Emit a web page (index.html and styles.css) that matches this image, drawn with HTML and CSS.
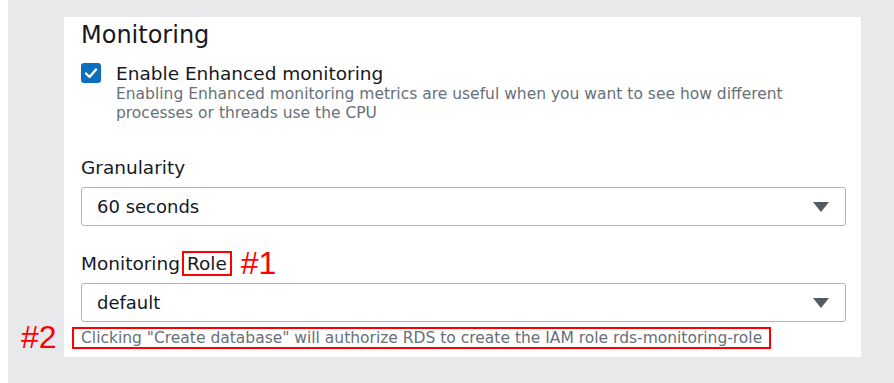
FILE: index.html
```html
<!DOCTYPE html>
<html lang="en">
<head>
    <meta charset="UTF-8">
    <meta name="viewport" content="width=device-width, initial-scale=1.0">
    <title>Monitoring</title>
    <link rel="stylesheet" href="styles.css">
</head>
<body>

    <div class="page">
        <div class="panel">
            <h2 class="title">Monitoring</h2>

            <div class="check-row">
                <span class="checkbox">
                    <svg width="14" height="12" viewBox="0 0 14 12"><path d="M2 6.5 L5.5 10 L12 2.5" fill="none" stroke="#fff" stroke-width="2.4" stroke-linecap="round" stroke-linejoin="round"/></svg>
                </span>
                <div class="check-text">
                    <div class="check-label">Enable Enhanced monitoring</div>
                    <div class="check-desc">Enabling Enhanced monitoring metrics are useful when you want to see how different processes or threads use the CPU</div>
                </div>
            </div>

            <div class="field">
                <div class="field-label">Granularity</div>
                <div class="select">
                    <span>60 seconds</span>
                    <svg class="caret" width="16" height="10" viewBox="0 0 16 10"><path d="M0 0 H16 L8 10 Z" fill="#545b64"/></svg>
                </div>
            </div>

            <div class="field field-role">
                <div class="field-label">Monitoring<span class="mark">Role</span><span class="tag tag-one">#1</span></div>
                <div class="select">
                    <span>default</span>
                    <svg class="caret" width="16" height="10" viewBox="0 0 16 10"><path d="M0 0 H16 L8 10 Z" fill="#545b64"/></svg>
                </div>
                <div class="hint-row">
                    <span class="tag tag-two">#2</span>
                    <span class="hint">Clicking "Create database" will authorize RDS to create the IAM role rds-monitoring-role</span>
                </div>
            </div>
        </div>
    </div>

</body>
</html>
```

FILE: styles.css
```css
/* General */
body {
    margin: 0;
    padding: 0;
    background: #fff;
    font-family: 'DejaVu Sans', 'Noto Sans', sans-serif;
    color: #16191f;
}

.page {
    margin-left: 8px;
    height: 383px;
    box-sizing: border-box;
    background: #e9e9eb;
    padding: 17px 33px 0 56px;
}

/* White card */
.panel {
    background: #fff;
    height: 340px;
    box-sizing: border-box;
    padding: 3px 15px 0 17px;
}

.title {
    margin: 0;
    font-size: 24px;
    font-weight: normal;
    line-height: 30px;
}

/* Checkbox */
.check-row {
    display: flex;
    gap: 15px;
    margin-top: 13px;
}

.checkbox {
    width: 20px;
    height: 20px;
    flex: none;
    border-radius: 3px;
    background: #0f6dbf;
    display: flex;
    align-items: center;
    justify-content: center;
}

.check-label {
    font-size: 18.5px;
    line-height: 22px;
}

.check-desc {
    font-size: 15.5px;
    line-height: 19px;
    color: #687078;
    max-width: 690px;
}

/* Select fields */
.field {
    margin-top: 33px;
}

.field-label {
    font-size: 18.5px;
    line-height: 24px;
    margin-bottom: 7px;
}

.select {
    height: 39px;
    box-sizing: border-box;
    border: 1px solid #aab7b8;
    border-radius: 3px;
    display: flex;
    align-items: center;
    justify-content: space-between;
    padding: 0 16px 0 15px;
    font-size: 18px;
    line-height: 22px;
}

.caret {
    display: block;
}

.field-role {
    margin-top: 26px;
}

/* Annotations */
.mark {
    outline: 2px solid #ff0000;
    outline-offset: 0;
    margin-left: 4px;
    padding: 0 3px;
}

.tag {
    color: #ff0000;
    font-family: 'Liberation Sans', sans-serif;
    font-size: 32px;
}

.tag-one {
    margin-left: 11px;
    line-height: 20px;
    vertical-align: -4px;
}

.hint-row {
    position: relative;
    margin-top: 5px;
}

.tag-two {
    position: absolute;
    left: -60px;
    top: -4px;
    line-height: 28px;
}

.hint {
    display: inline-block;
    margin-left: -9px;
    padding: 0 7px;
    border: 2px solid #ff0000;
    font-size: 15.5px;
    line-height: 18px;
    color: #687078;
}
```
